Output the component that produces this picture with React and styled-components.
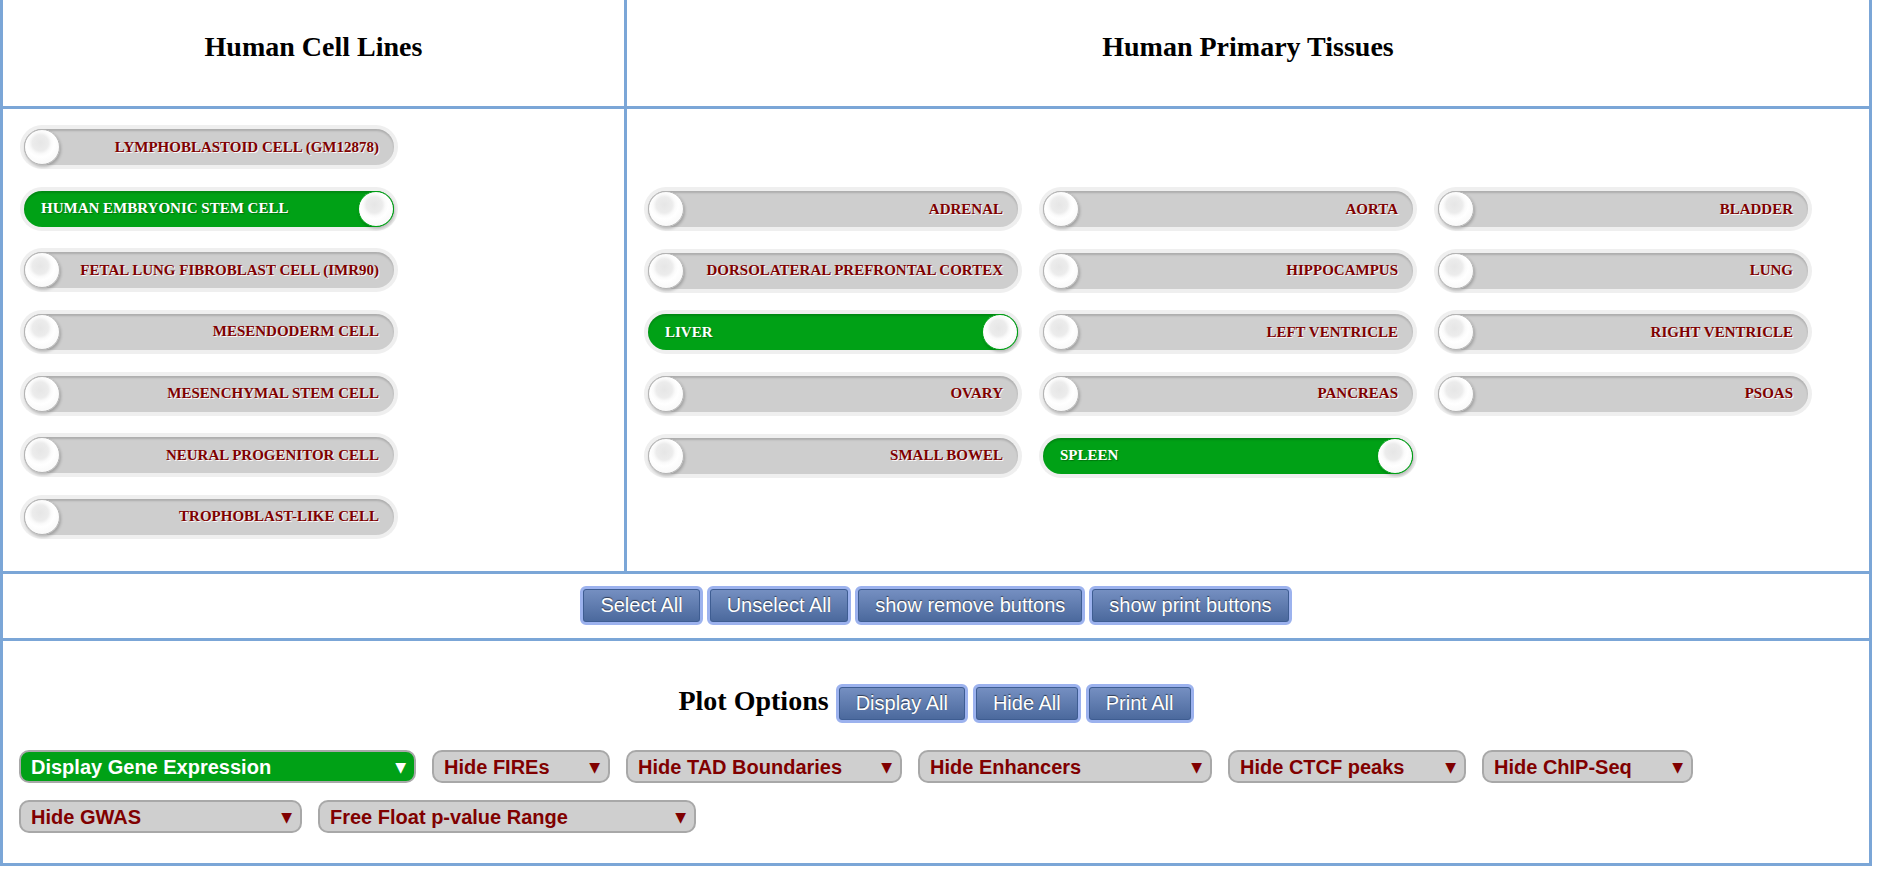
import React, { useState } from 'react';
import styled, { createGlobalStyle } from 'styled-components';

const GlobalStyle = createGlobalStyle`
  body {
    margin: 0;
    background: #fff;
  }
`;

const LINE = '#7ba6d7';

const cellLines = [
  { name: 'LYMPHOBLASTOID CELL (GM12878)', on: false },
  { name: 'HUMAN EMBRYONIC STEM CELL', on: true },
  { name: 'FETAL LUNG FIBROBLAST CELL (IMR90)', on: false },
  { name: 'MESENDODERM CELL', on: false },
  { name: 'MESENCHYMAL STEM CELL', on: false },
  { name: 'NEURAL PROGENITOR CELL', on: false },
  { name: 'TROPHOBLAST-LIKE CELL', on: false },
];

const tissues = [
  { name: 'ADRENAL', on: false },
  { name: 'AORTA', on: false },
  { name: 'BLADDER', on: false },
  { name: 'DORSOLATERAL PREFRONTAL CORTEX', on: false },
  { name: 'HIPPOCAMPUS', on: false },
  { name: 'LUNG', on: false },
  { name: 'LIVER', on: true },
  { name: 'LEFT VENTRICLE', on: false },
  { name: 'RIGHT VENTRICLE', on: false },
  { name: 'OVARY', on: false },
  { name: 'PANCREAS', on: false },
  { name: 'PSOAS', on: false },
  { name: 'SMALL BOWEL', on: false },
  { name: 'SPLEEN', on: true },
];

const plotRows = [
  [
    { label: 'Display Gene Expression', width: 397, on: true },
    { label: 'Hide FIREs', width: 178 },
    { label: 'Hide TAD Boundaries', width: 276 },
    { label: 'Hide Enhancers', width: 294 },
    { label: 'Hide CTCF peaks', width: 238 },
    { label: 'Hide ChIP-Seq', width: 211 },
  ],
  [
    { label: 'Hide GWAS', width: 283 },
    { label: 'Free Float p-value Range', width: 378 },
  ],
];

const Toggle = ({ name, on, onClick }) => (
  <Track $on={on} onClick={onClick}>
    {name}
    <Knob $on={on} />
  </Track>
);

const PlotSelect = ({ label, width, on }) => (
  <SelectWrap style={{ width }}>
    <Select $on={on} defaultValue={label}>
      <option>{label}</option>
    </Select>
    <Arrow $on={on}>▼</Arrow>
  </SelectWrap>
);

const App = () => {
  const [cells, setCells] = useState(cellLines);
  const [tiss, setTiss] = useState(tissues);

  const flip = (list, setList, i) =>
    setList(list.map((t, j) => (j === i ? { ...t, on: !t.on } : t)));

  return (
    <>
      <GlobalStyle />
      <Panel>
        <Row>
          <LeftCell>
            <HeadCell>
              <Title>Human Cell Lines</Title>
            </HeadCell>
          </LeftCell>
          <RightCell>
            <HeadCell>
              <Title>Human Primary Tissues</Title>
            </HeadCell>
          </RightCell>
        </Row>
        <Row>
          <LeftCell>
            <CellList>
              {cells.map((c, i) => (
                <Toggle key={c.name} {...c} onClick={() => flip(cells, setCells, i)} />
              ))}
            </CellList>
          </LeftCell>
          <RightCell>
            <TissueGrid>
              {tiss.map((t, i) => (
                <Toggle key={t.name} {...t} onClick={() => flip(tiss, setTiss, i)} />
              ))}
            </TissueGrid>
          </RightCell>
        </Row>
        <ButtonRow>
          <BlueButton>Select All</BlueButton>
          <BlueButton>Unselect All</BlueButton>
          <BlueButton>show remove buttons</BlueButton>
          <BlueButton>show print buttons</BlueButton>
        </ButtonRow>
        <PlotCell>
          <PlotHead>
            <PlotTitle>Plot Options</PlotTitle>
            <BlueButton>Display All</BlueButton>
            <BlueButton>Hide All</BlueButton>
            <BlueButton>Print All</BlueButton>
          </PlotHead>
          {plotRows.map((row, i) => (
            <SelectRow key={i}>
              {row.map((s) => (
                <PlotSelect key={s.label} {...s} />
              ))}
            </SelectRow>
          ))}
        </PlotCell>
      </Panel>
    </>
  );
};

const Panel = styled.div`
  width: 1872px;
  box-sizing: border-box;
  border: 3px solid ${LINE};
  border-top: none;
`;

const Row = styled.div`
  display: flex;
  border-bottom: 3px solid ${LINE};
`;

const LeftCell = styled.div`
  width: 621px;
  border-right: 3px solid ${LINE};
`;

const RightCell = styled.div`
  flex: 1;
`;

const HeadCell = styled.div`
  height: 106px;
  box-sizing: border-box;
  padding-bottom: 12px;
  display: flex;
  align-items: center;
  justify-content: center;
`;

const Title = styled.h2`
  margin: 0;
  font: bold 28px 'Liberation Serif', 'Times New Roman', serif;
  color: #000;
`;

const CellList = styled.div`
  height: 462px;
  box-sizing: border-box;
  padding: 20px 21px;
  display: flex;
  flex-direction: column;
  gap: 25.67px;
`;

const TissueGrid = styled.div`
  padding: 82px 21px 0;
  display: grid;
  grid-template-columns: repeat(3, 370px);
  column-gap: 25px;
  row-gap: 25.67px;
`;

const Track = styled.button`
  position: relative;
  width: 370px;
  height: 36px;
  flex: none;
  border: none;
  border-radius: 18px;
  background: ${(p) => (p.$on ? '#00a116' : '#cecece')};
  box-shadow: inset 0 2px 2px rgba(0, 0, 0, 0.16), 0 0 0 4px #efefef;
  display: flex;
  align-items: center;
  justify-content: ${(p) => (p.$on ? 'flex-start' : 'flex-end')};
  padding: ${(p) => (p.$on ? '0 0 0 17px' : '0 15px 0 0')};
  font: bold 15px 'Liberation Serif', 'Times New Roman', serif;
  color: ${(p) => (p.$on ? '#fff' : '#800000')};
  text-shadow: ${(p) =>
    p.$on ? '1px 1px 1px rgba(0, 60, 0, 0.45)' : '1px 1px 0 rgba(255, 255, 255, 0.9)'};
  cursor: pointer;
  white-space: nowrap;
`;

const Knob = styled.span`
  position: absolute;
  top: 0;
  ${(p) => (p.$on ? 'right: 0;' : 'left: 0;')}
  width: 36px;
  height: 36px;
  box-sizing: border-box;
  border-radius: 50%;
  border: 1px solid ${(p) => (p.$on ? '#00a116' : '#b4b4b4')};
  background: radial-gradient(
    circle at 45% 38%,
    #e6e6e6 0,
    #ececec 8px,
    #fafafa 11px,
    #ffffff 14px,
    #f3f3f3 100%
  );
  box-shadow: 1px 2px 3px rgba(0, 0, 0, 0.22);
`;

const ButtonRow = styled.div`
  height: 67px;
  box-sizing: border-box;
  padding-top: 12px;
  display: flex;
  justify-content: center;
  align-items: flex-start;
  gap: 4px;
  border-bottom: 3px solid ${LINE};
`;

const BlueButton = styled.button`
  height: 39px;
  padding: 0 17px;
  border: 3px solid #9cb2ee;
  border-radius: 6px;
  background: linear-gradient(#7690c2, #4a689c);
  box-shadow: inset 0 0 0 1px #3e5d92;
  color: #fff;
  font: 20px 'Liberation Sans', Arial, sans-serif;
  text-shadow: 0 -1px 1px rgba(0, 0, 0, 0.55);
  cursor: pointer;
  white-space: nowrap;
`;

const PlotCell = styled.div`
  padding: 43px 16px 30px;
`;

const PlotHead = styled.div`
  display: flex;
  justify-content: center;
  align-items: flex-start;
  gap: 5px;
`;

const PlotTitle = styled.h3`
  margin: 0 2px 0 0;
  font: bold 28px/34px 'Liberation Serif', 'Times New Roman', serif;
  color: #000;
`;

const SelectRow = styled.div`
  display: flex;
  gap: 16px;
  margin-top: 27px;

  & + & {
    margin-top: 17px;
  }
`;

const SelectWrap = styled.div`
  position: relative;
  height: 33px;
`;

const Select = styled.select`
  appearance: none;
  width: 100%;
  height: 100%;
  box-sizing: border-box;
  padding: 0 0 0 10px;
  border: 2px solid #a8a8a8;
  border-radius: 10px;
  background: ${(p) => (p.$on ? '#00a116' : '#cfcfcf')};
  color: ${(p) => (p.$on ? '#fff' : '#800000')};
  font: bold 20px 'Liberation Sans', Arial, sans-serif;
  cursor: pointer;
`;

const Arrow = styled.span`
  position: absolute;
  right: 10px;
  top: 50%;
  transform: translateY(-50%);
  font: 14px 'DejaVu Sans', sans-serif;
  color: ${(p) => (p.$on ? '#fff' : '#800000')};
  pointer-events: none;
`;

export default App;
